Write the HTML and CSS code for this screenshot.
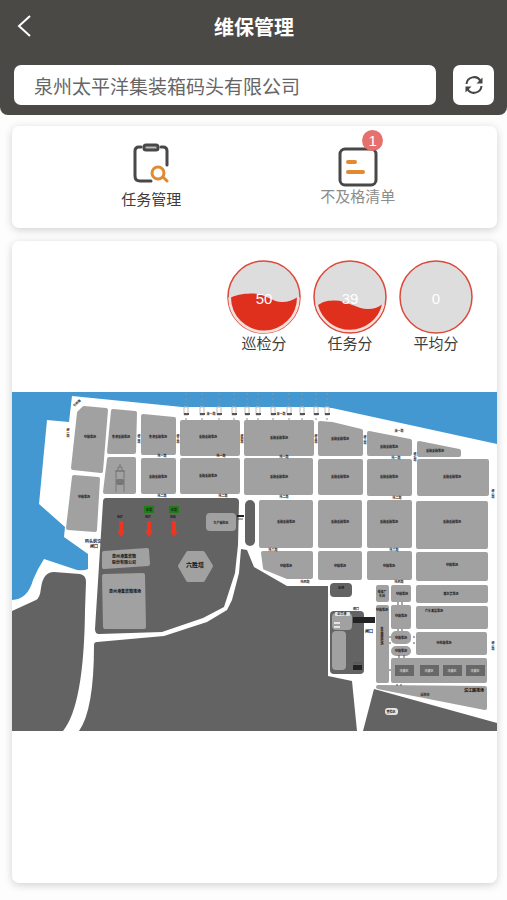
FILE: index.html
```html
<!DOCTYPE html>
<html lang="zh-CN">

<head>

    <meta charset="UTF-8">
    <meta name="viewport" content="width=device-width, initial-scale=1.0">
    <title>维保管理</title>

    <link rel="stylesheet" href="styles.css">

</head>

<body>

    <header class="header">
        <div class="title-bar">
            <button class="back" type="button" aria-label="返回">
                <svg viewBox="0 0 14 22" width="14" height="22">
                    <path d="M13 1 L2 11 L13 21" />
                </svg>
            </button>
            <h1>维保管理</h1>
        </div>
        <form class="search">
            <input type="text" aria-label="公司" value="泉州太平洋集装箱码头有限公司">
            <button class="refresh" type="button" aria-label="刷新">
                <svg viewBox="0 0 40 40" width="20" height="20">
                    <path class="arc" d="M5 18 A15 15 0 0 1 33 12" />
                    <path class="arc" d="M35 22 A15 15 0 0 1 7 28" />
                    <path class="head" d="M37 5 V17 H25 Z" />
                    <path class="head" d="M3 35 V23 H15 Z" />
                </svg>
            </button>
        </form>
    </header>

    <main>

        <nav class="card menu">
            <a href="#tasks" class="menu-item">
                <svg viewBox="0 0 36 40" width="36" height="40">
                    <g class="ink">
                        <path d="M8 4 H6 Q2 4 2 8 V33 Q2 38 7 38 H18" />
                        <path d="M28 4 H30 Q34 4 34 8 V22" />
                        <rect x="11" y="2" width="14" height="5" rx="2" fill="#bbb" />
                    </g>
                    <g class="accent">
                        <circle cx="25" cy="30" r="6" />
                        <path d="M30 34 L34 38" />
                    </g>
                </svg>
                <span>任务管理</span>
            </a>
            <a href="#failed" class="menu-item muted">
                <svg viewBox="0 0 40 40" width="40" height="40">
                    <rect class="ink" x="2" y="2" width="36" height="36" rx="5" />
                    <path class="accent bars" d="M10 15 H17 M10 25 H25" />
                </svg>
                <i class="badge">1</i>
                <span>不及格清单</span>
            </a>
        </nav>

        <section class="card overview">

            <div class="gauges">
                <div class="gauge">
                    <svg viewBox="0 0 148 148">
                        <circle class="ring" cx="74" cy="74" r="72" />
                        <path class="glow" d="M5 75 A69 69 0 0 0 143 75" />
                        <path class="wave" d="M8 75 C22 68 38 67 53 67 C75 67 90 84 110 84 C122 84 132 80 140 75 A66 66 0 0 1 8 75 Z" />
                        <text x="74" y="88">50</text>
                    </svg>
                    <span>巡检分</span>
                </div>
                <div class="gauge">
                    <svg viewBox="0 0 148 148">
                        <circle class="ring" cx="74" cy="74" r="72" />
                        <path class="glow" d="M7 89 A69 69 0 0 0 141 89" />
                        <path class="wave" d="M10 90 C22 82 32 81 43 81 C68 81 88 98 110 98 C121 98 130 95 138 89 A66 66 0 0 1 10 90 Z" />
                        <text x="74" y="88">39</text>
                    </svg>
                    <span>任务分</span>
                </div>
                <div class="gauge">
                    <svg viewBox="0 0 148 148">
                        <circle class="ring" cx="74" cy="74" r="72" />
                        <text x="74" y="88">0</text>
                    </svg>
                    <span>平均分</span>
                </div>
            </div>

            <svg class="map" viewBox="12 392 485 339">

                <path class="water" d="M12 392 H497 V444 L332 408 L318 407 H182 L72 396 L69 422 L47 420 L39 504 L65 527 L64 537 L88 554 V569 Q84 571 77 570 L44 559 Q38 568 33 580 Q28 599 12 600 Z" />

                <!-- land -->
                <g class="land">
                    <path d="M12 611 L36 600 Q40 598 41 588 Q43 572 54 572 L80 574 Q86 575 86 582 L85 610 Q84 705 63 731 H12 Z" />
                    <path d="M97 642 L164 636 L207 622 L227 610 L232 600 L239 573 L241 549 L247 550 L254 567 L287 586 H328 V676 L352 681 L357 731 H79 Q94 710 94 645 Q94 642 97 642 Z" />
                    <path d="M374 689 L497 723 V731 H363 Z" />
                    <path d="M106 498 H235 Q239 498 239 502 L238 545 L235 573 L224 607 L203 618 L162 632 L99 634 Q95 634 95 629 L103 502 Q103 498 106 498 Z" />
                    <rect x="245" y="500" width="10" height="46" rx="5" />
                    <rect x="330" y="583" width="22" height="14" rx="4" />
                    <rect x="330" y="611" width="34" height="63" rx="4" />
                </g>

                <!-- blocks -->
                <g class="blocks">
                    <path d="M79 413 L84 408 L106 410 L101 471 L73 468 Z" />
                    <path d="M113 411 L135 413 L134 452 L109 452 Z" />
                    <path d="M143 416 L174 419 V453 H143 Z" />
                    <path d="M182 422 H238 V454 H182 Z" />
                    <path d="M246 422 H312 V454 H246 Z" />
                    <path d="M320 423 L332 424 L361 431 V454 H320 Z" />
                    <path d="M369 433 L410 441 V454 H369 Z" />
                    <path d="M419 443 L459 451 V455 H419 Z" />
                    <path d="M109 459 H134 V492 H105 Z" />
                    <path d="M143 460 H174 V492 H143 Z" />
                    <path d="M182 460 H238 V492 H182 Z" />
                    <path d="M246 460 H311 V493 H246 Z" />
                    <path d="M320 461 H361 V493 H320 Z" />
                    <path d="M369 461 H410 V494 H369 Z" />
                    <path d="M419 461 H487 V494 H419 Z" />
                    <path d="M74 477 L98 479 L95 530 L68 528 Z" />
                    <path d="M261 502 H311 V546 H261 Z" />
                    <path d="M320 502 H360 V546 H320 Z" />
                    <path d="M369 502 H410 V546 H369 Z" />
                    <path d="M418 503 H486 V547 H418 Z" />
                    <path d="M263 553 H311 V577 H287 L265 568 Z" />
                    <path d="M320 553 H360 V578 H320 Z" />
                    <path d="M369 553 H410 V578 H369 Z" />
                    <path d="M418 554 H486 V579 H418 Z" />
                    <path d="M418 587 H486 V601 H418 Z" />
                    <path d="M418 608 H486 V627 H418 Z" />
                    <path d="M418 634 H485 V653 H418 Z" />
                    <path d="M393 660 H485 V681 H393 Z" />
                    <path d="M378 687 L485 688 V708 L480 707 Z" />
                    <path d="M378 587 H387 V600 H378 Z" />
                    <path d="M378 607 H387 V681 H378 Z" />
                    <path d="M393 587 H409 V600 H393 Z" />
                    <path d="M393 607 H409 V627 H393 Z" />
                    <rect x="393" y="633" width="16" height="9" rx="3" />
                    <rect x="393" y="648" width="16" height="6" rx="3" />
                    <path d="M104 553 L147 550 L148 564 L104 567 Z" />
                    <path d="M104 576 L143 575 L144 627 L105 627 Z" />
                    <rect x="208" y="515" width="26" height="14" rx="2" />
                    <path d="M188 553 H203 L211 566 L203 580 H188 L180 566 Z" />
                    <rect x="334" y="615" width="16" height="13" rx="2" />
                    <rect x="334" y="633" width="10" height="35" rx="2" />
                </g>

                <g class="yards">
                    <rect x="395" y="665" width="19" height="11" />
                    <rect x="420" y="665" width="19" height="11" />
                    <rect x="443" y="665" width="19" height="11" />
                    <rect x="466" y="665" width="19" height="11" />
                </g>

                <!-- gates -->
                <g class="gate">
                    <rect x="353" y="617" width="22" height="6" />
                    <rect x="353" y="665" width="9" height="5" />
                    <rect x="237" y="515" width="7" height="2" />
                    <path class="thin" d="M353 663 H362 M237 519 H243 M389 637 H391 M389 643 H391 M413 637 H415 M413 643 H415 M389 670 H391 M398 602 V605 M402 602 V605 M398 629 V631 M402 629 V631 M399 655 V658 M404 655 V658 M397 684 V686 M401 684 V686" />
                </g>
                <rect class="plate" x="335" y="612" width="15" height="4" rx="1" />
                <path class="plate" d="M334 622 h6 v2 h-6 Z M334 626 h6 v2 h-6 Z" />
                <rect class="plate" x="385" y="708" width="13" height="7" rx="3" />

                <!-- lighthouse -->
                <path class="tower" d="M116 492 V471 H124 V492 M115 471 H125 M118 471 V467 H122 V471 M120 467 V464" />
                <rect class="tower-window" x="116" y="479" width="8" height="6" rx="2" />

                <!-- cranes -->
                <path class="crane-arm" d="M186 393 V420 M202 393 V420 M219 393 V420 M234 393 V420 M247 393 V420 M258 393 V420 M273 393 V420 M289 393 V420 M302 393 V420 M316 393 V420 M327 393 V420" />
                <path class="crane" d="M184 407 h4 v8 h-4 Z M200 407 h4 v8 h-4 Z M217 407 h4 v8 h-4 Z M232 407 h4 v8 h-4 Z M245 407 h4 v8 h-4 Z M256 407 h4 v8 h-4 Z M271 407 h4 v8 h-4 Z M287 407 h4 v8 h-4 Z M300 407 h4 v8 h-4 Z M314 407 h4 v8 h-4 Z M325 407 h4 v8 h-4 Z" />
                <path class="crane-foot" d="M184 414 h5 M200 414 h5 M217 414 h5 M232 414 h5 M245 414 h5 M256 414 h5 M271 414 h5 M287 414 h5 M300 414 h5 M314 414 h5 M325 414 h5" />

                <!-- equipment -->
                <g class="arrows">
                    <path d="M119 521 h4 v10 h2 l-4 6 l-4 -6 h2 Z" />
                    <path d="M147 521 h4 v10 h2 l-4 6 l-4 -6 h2 Z" />
                    <path d="M172 521 h4 v10 h2 l-4 6 l-4 -6 h2 Z" />
                </g>
                <rect class="tag" x="144" y="506" width="10" height="7" />
                <rect class="tag" x="169" y="506" width="10" height="7" />

                <g class="label">
                    <text x="90" y="438">空箱堆场</text>
                    <text x="121" y="438">集港重箱堆场</text>
                    <text x="158" y="438">集港重箱堆场</text>
                    <text x="208" y="438">重箱重箱堆场</text>
                    <text x="279" y="439">重箱重箱堆场</text>
                    <text x="340" y="440">重箱重箱堆场</text>
                    <text x="389" y="448">重箱重箱堆场</text>
                    <text x="435" y="452">重箱重箱堆场</text>
                    <text x="158" y="478">重箱重箱堆场</text>
                    <text x="208" y="477">重箱重箱堆场</text>
                    <text x="279" y="478">重箱重箱堆场</text>
                    <text x="340" y="478">重箱重箱堆场</text>
                    <text x="389" y="478">重箱重箱堆场</text>
                    <text x="452" y="478">重箱重箱堆场</text>
                    <text x="84" y="498">空箱堆场</text>
                    <text x="286" y="523">重箱重箱堆场</text>
                    <text x="340" y="523">重箱重箱堆场</text>
                    <text x="389" y="523">重箱重箱堆场</text>
                    <text x="452" y="523">重箱重箱堆场</text>
                    <text x="286" y="567">空箱堆场</text>
                    <text x="340" y="567">空箱堆场</text>
                    <text x="389" y="567">空箱堆场</text>
                    <text x="452" y="566">空箱堆场</text>
                    <text x="451" y="595">散杂货堆场</text>
                    <text x="434" y="612">汽车滚装堆场</text>
                    <text x="444" y="644">待检箱堆场</text>
                    <text x="425" y="696">绿化带</text>
                    <text x="402" y="595">空箱堆场</text>
                    <text x="401" y="617">空箱堆场</text>
                    <text x="401" y="639">空箱堆场</text>
                    <text x="401" y="652">空箱堆场</text>
                    <text x="382" y="593">维修厂</text>
                    <text x="382" y="597">车间</text>
                    <text x="382" y="611">空箱堆场</text>
                    <text class="vertical" x="382" y="636">集装箱检验场</text>
                    <text x="221" y="524">生产辅助区</text>
                    <text x="341" y="589">水池</text>
                    <text x="342" y="615">综合楼</text>
                    <text x="391" y="713">查验区</text>
                    <text x="120" y="518">N07</text>
                    <text x="148" y="518">N07</text>
                    <text x="173" y="518">N06</text>
                    <text x="149" y="511">正常</text>
                    <text x="174" y="511">正常</text>
                    <text x="211" y="415">海一路</text>
                    <text x="281" y="415">海一路</text>
                    <text x="399" y="432">海一路</text>
                    <text x="221" y="457">纬一路</text>
                    <text x="284" y="458">纬一路</text>
                    <text x="396" y="459">纬一路</text>
                    <text x="162" y="457">纬一路</text>
                    <text x="162" y="497">纬二路</text>
                    <text x="223" y="497">纬二路</text>
                    <text x="284" y="498">纬二路</text>
                    <text x="397" y="499">纬二路</text>
                    <text x="273" y="551">纬三路</text>
                    <text x="394" y="551">纬三路</text>
                    <text x="305" y="583">纬四路</text>
                    <text x="399" y="583">纬四路</text>
                    <text x="356" y="610">闸口</text>
                    <text class="vertical" x="68" y="433">经一路</text>
                    <text class="vertical" x="139" y="439">经二路</text>
                    <text class="vertical" x="178" y="439">经三路</text>
                    <text class="vertical" x="242" y="439">经四路</text>
                    <text class="vertical" x="316" y="439">经五路</text>
                    <text class="vertical" x="365" y="440">经六路</text>
                    <text class="vertical" x="415" y="457">经七路</text>
                    <text class="vertical" x="493" y="494">经八路</text>
                    <text class="vertical" x="493" y="646">经八路</text>
                    <text transform="rotate(-40 77 403)" x="77" y="404">引桥路</text>
                </g>
                <g class="label yard-label">
                    <text x="404" y="672">冷藏区</text>
                    <text x="429" y="672">冷藏区</text>
                    <text x="452" y="672">冷藏区</text>
                    <text x="475" y="672">冷藏区</text>
                </g>
                <g class="label medium">
                    <text x="93" y="543">码头前沿</text>
                    <text x="94" y="548">闸口</text>
                    <text x="124" y="558">泉州港集装箱</text>
                    <text x="124" y="564">股份有限公司</text>
                    <text x="125" y="593">泉州港集装箱堆场</text>
                    <text x="369" y="633">闸口</text>
                    <text x="474" y="692">滨江路堆场</text>
                </g>
                <text class="label large" x="195" y="567">六胜塔</text>
            </svg>

        </section>

    </main>

</body>

</html>
```
FILE: styles.css
```css
* {
    box-sizing: border-box;
}

body {
    margin: 0;
    min-height: 100vh;
    display: flex;
    flex-direction: column;
    background-color: #fdfdfd;
    color: #3c3c3c;
    font-family: "Liberation Sans", "Noto Sans CJK SC", sans-serif;
    font-size: 15px;
    line-height: 20px;
}

svg {
    display: block;
    fill: none;
}

.header {
    background-color: #4b4946;
    border-radius: 0 0 8px 8px;
    padding: 0 13px 10px 14px;
}

.title-bar {
    display: grid;
    grid-template-columns: 40px 1fr 40px;
    align-items: center;
    height: 56px;
    margin-bottom: 9px;
}

.title-bar h1 {
    margin: 0;
    color: #fff;
    font-size: 20px;
    line-height: 28px;
    text-align: center;
}

button {
    border: 0;
    padding: 0;
    background: none;
}

.back {
    height: 40px;
    padding: 0 3px 4px;
}

.back path {
    stroke: #fff;
    stroke-width: 2;
}

.search {
    display: flex;
    gap: 17px;
}

.search input {
    flex: 1;
    min-width: 0;
    height: 40px;
    border: 0;
    border-radius: 7px;
    padding: 0 20px;
    background-color: #fff;
    color: #666;
    font: inherit;
    font-size: 19px;
}

.refresh {
    width: 41px;
    height: 40px;
    display: flex;
    align-items: center;
    justify-content: center;
    border-radius: 7px;
    background-color: #fff;
}

.refresh .arc {
    stroke: #444;
    stroke-width: 4;
}

.refresh .head {
    fill: #444;
}

main {
    flex: 1;
    display: flex;
    flex-direction: column;
    gap: 13px;
    padding: 11px 10px 17px 12px;
}

.card {
    background-color: #fff;
    border-radius: 7px;
    box-shadow: 0 2px 8px rgba(0, 0, 0, 0.18);
}

.menu {
    display: grid;
    grid-template-columns: 1fr 1fr;
    justify-items: center;
    align-items: start;
    height: 102px;
    padding: 17px 36px 0;
}

.menu-item {
    position: relative;
    display: flex;
    flex-direction: column;
    align-items: center;
    gap: 7px;
    color: inherit;
    text-decoration: none;
}

.menu-item.muted {
    gap: 0;
    padding-top: 4px;
    color: #8c8c8c;
}

.ink {
    stroke: #484848;
    stroke-width: 3;
    stroke-linecap: round;
}

.accent {
    stroke: #e08a32;
    stroke-width: 3;
    stroke-linecap: round;
}

.bars {
    stroke-width: 4;
}

.badge {
    position: absolute;
    top: -13px;
    right: 12px;
    width: 21px;
    height: 21px;
    border-radius: 50%;
    background-color: #e6706d;
    color: #fff;
    font-style: normal;
    line-height: 21px;
    text-align: center;
}

.overview {
    flex: 1;
}

.gauges {
    display: flex;
    justify-content: flex-end;
    gap: 12px;
    padding: 19px 24px 38px;
}

.gauge {
    width: 74px;
    text-align: center;
}

.gauge span {
    display: block;
}

.gauge .ring {
    fill: #ddd;
    stroke: #dc4939;
    stroke-width: 3;
}

.gauge .glow {
    stroke: #f8dedb;
    stroke-width: 5;
}

.gauge .wave {
    fill: #df301e;
}

.gauge text {
    fill: #fff;
    font-size: 30px;
    text-anchor: middle;
}

.map {
    width: 100%;
}

.water {
    fill: #4398d1;
}

.land {
    fill: #636363;
}

.blocks {
    fill: #a1a1a1;
    stroke: #a1a1a1;
    stroke-width: 4;
    stroke-linejoin: round;
}

.yards {
    fill: #686868;
}

.gate {
    fill: #222;
}

.gate .thin {
    stroke: #555;
    stroke-width: 1;
}

.plate {
    fill: #e4e4e4;
}

.tower {
    stroke: #777;
    stroke-width: 1;
}

.tower-window {
    fill: #777;
}

.crane-arm {
    stroke: #8a9299;
    stroke-width: 1;
    stroke-dasharray: 2 3;
}

.crane {
    fill: #fff;
    stroke: #bbb;
    stroke-width: 1;
}

.crane-foot {
    stroke: #555;
    stroke-width: 2;
}

.arrows {
    fill: #ee3524;
}

.tag {
    fill: #1f7d16;
}

.label {
    fill: #111;
    font-size: 3px;
    font-weight: bold;
    text-anchor: middle;
}

.label .vertical {
    writing-mode: vertical-rl;
}

.yard-label {
    fill: #ccc;
}

.medium {
    font-size: 4px;
}

.large {
    font-size: 6px;
}
```
